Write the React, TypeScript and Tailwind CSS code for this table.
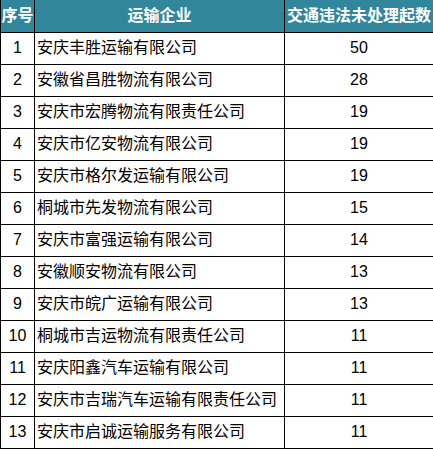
const rows: [number, string, number][] = [
  [1, '安庆丰胜运输有限公司', 50],
  [2, '安徽省昌胜物流有限公司', 28],
  [3, '安庆市宏腾物流有限责任公司', 19],
  [4, '安庆市亿安物流有限公司', 19],
  [5, '安庆市格尔发运输有限公司', 19],
  [6, '桐城市先发物流有限公司', 15],
  [7, '安庆市富强运输有限公司', 14],
  [8, '安徽顺安物流有限公司', 13],
  [9, '安庆市皖广运输有限公司', 13],
  [10, '桐城市吉运物流有限责任公司', 11],
  [11, '安庆阳鑫汽车运输有限公司', 11],
  [12, '安庆市吉瑞汽车运输有限责任公司', 11],
  [13, '安庆市启诚运输服务有限公司', 11],
];

export default function App() {
  return (
    <div className="w-[433px] h-[449px] bg-white font-['Liberation_Sans','Noto_Sans_CJK_SC',sans-serif] text-[16px] text-black">
      <table className="w-[433px] table-fixed border-collapse">
        <colgroup>
          <col className="w-[34px]" />
          <col className="w-[250px]" />
          <col className="w-[149px]" />
        </colgroup>
        <thead>
          <tr className="h-[32px] bg-[#31869b] text-white font-bold">
            <th className="border-x border-b border-black p-0 whitespace-nowrap">序号</th>
            <th className="border-x border-b border-black p-0">运输企业</th>
            <th className="border-x border-b border-black p-0 whitespace-nowrap">交通违法未处理起数</th>
          </tr>
        </thead>
        <tbody>
          {rows.map(([no, name, count]) => (
            <tr key={no} className="h-[32px]">
              <td className="border border-black p-0 text-center">{no}</td>
              <td className="border border-black py-0 pl-[2px] whitespace-nowrap">{name}</td>
              <td className="border border-black p-0 text-center">{count}</td>
            </tr>
          ))}
        </tbody>
      </table>
    </div>
  );
}
